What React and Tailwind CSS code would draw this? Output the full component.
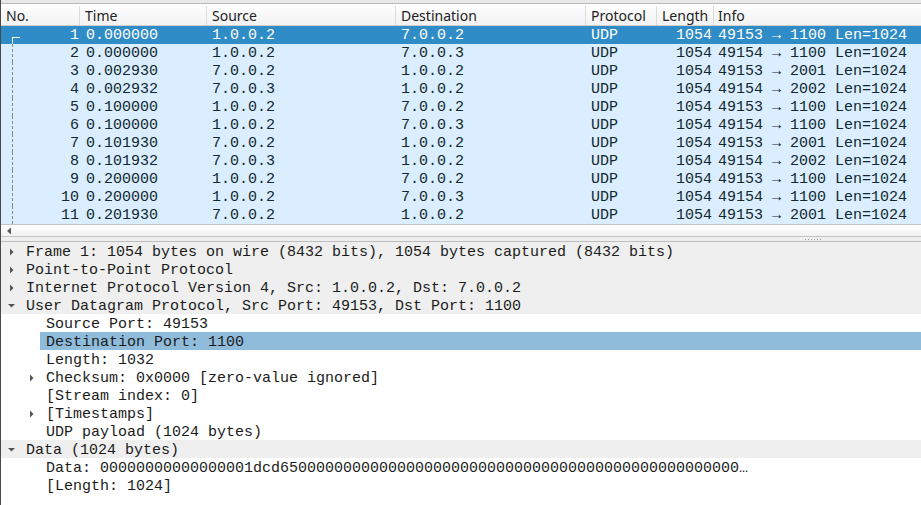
import React from "react";

const packets = [
  ["1", "0.000000", "1.0.0.2", "7.0.0.2", "49153", "1100"],
  ["2", "0.000000", "1.0.0.2", "7.0.0.3", "49154", "1100"],
  ["3", "0.002930", "7.0.0.2", "1.0.0.2", "49153", "2001"],
  ["4", "0.002932", "7.0.0.3", "1.0.0.2", "49154", "2002"],
  ["5", "0.100000", "1.0.0.2", "7.0.0.2", "49153", "1100"],
  ["6", "0.100000", "1.0.0.2", "7.0.0.3", "49154", "1100"],
  ["7", "0.101930", "7.0.0.2", "1.0.0.2", "49153", "2001"],
  ["8", "0.101932", "7.0.0.3", "1.0.0.2", "49154", "2002"],
  ["9", "0.200000", "1.0.0.2", "7.0.0.2", "49153", "1100"],
  ["10", "0.200000", "1.0.0.2", "7.0.0.3", "49154", "1100"],
  ["11", "0.201930", "7.0.0.2", "1.0.0.2", "49153", "2001"],
];

const tree = [
  { level: 0, arrow: "closed", text: "Frame 1: 1054 bytes on wire (8432 bits), 1054 bytes captured (8432 bits)" },
  { level: 0, arrow: "closed", text: "Point-to-Point Protocol" },
  { level: 0, arrow: "closed", text: "Internet Protocol Version 4, Src: 1.0.0.2, Dst: 7.0.0.2" },
  { level: 0, arrow: "open", text: "User Datagram Protocol, Src Port: 49153, Dst Port: 1100" },
  { level: 1, text: "Source Port: 49153" },
  { level: 1, text: "Destination Port: 1100", selected: true },
  { level: 1, text: "Length: 1032" },
  { level: 1, arrow: "closed", text: "Checksum: 0x0000 [zero-value ignored]" },
  { level: 1, text: "[Stream index: 0]" },
  { level: 1, arrow: "closed", text: "[Timestamps]" },
  { level: 1, text: "UDP payload (1024 bytes)" },
  { level: 0, arrow: "open", text: "Data (1024 bytes)" },
  { level: 1, text: "Data: 00000000000000001dcd650000000000000000000000000000000000000000000000000…" },
  { level: 1, text: "[Length: 1024]" },
];

const mono = { fontFamily: '"Liberation Mono", "DejaVu Sans Mono", monospace' };

function Arrow({ type }) {
  if (type === "open") {
    return (
      <svg width="10" height="10" viewBox="0 0 10 10" className="shrink-0">
        <path d="M1 3 L8 3 L4.5 6.5 Z" fill="#555" />
      </svg>
    );
  }
  return (
    <svg width="10" height="10" viewBox="0 0 10 10" className="shrink-0">
      <path d="M3 1.5 L6.5 5 L3 8.5 Z" fill="#555" />
    </svg>
  );
}

function HeaderCell({ label, className }) {
  return (
    <div className={`h-full flex items-center pl-[5px] border-r border-[#dcdcdc] ${className}`}>
      {label}
    </div>
  );
}

export default function App() {
  return (
    <div className="w-[921px] h-[505px] bg-white overflow-hidden text-[#12272e] border-l border-[#4a4a4a]">
      <div className="h-[4px] bg-[#e8e8e8] border-b border-[#b8b8b8]" />
      <div
        className="h-[22px] flex bg-gradient-to-b from-white to-[#f2f2f2] border-b border-[#cfcfcf] text-[14px] text-[#222] pt-[2px]"
        style={{ fontFamily: '"Noto Sans", "Open Sans", sans-serif' }}
      >
        <HeaderCell label="No." className="w-[79px]" />
        <HeaderCell label="Time" className="w-[127px]" />
        <HeaderCell label="Source" className="w-[189px]" />
        <HeaderCell label="Destination" className="w-[190px]" />
        <HeaderCell label="Protocol" className="w-[71px]" />
        <HeaderCell label="Length" className="w-[57px]" />
        <div className="h-full flex items-center pl-[4px] flex-1">Info</div>
      </div>

      <div className="text-[15px]" style={mono}>
        {packets.map((p, i) => {
          const sel = i === 0;
          return (
            <div
              key={p[0]}
              className={`h-[18px] flex items-center whitespace-pre pt-[2px] ${
                sel ? "bg-[#308cc6] text-white" : "bg-[#daeeff]"
              }`}
            >
              <div className="w-[79px] h-full relative flex items-center justify-end pr-[1px]">
                {sel ? (
                  <span className="absolute left-[11px] top-[9px] w-[8px] h-[8px] border-l border-t border-white" />
                ) : (
                  <span className="absolute left-[11px] -top-[2px] h-[18px] border-l border-dashed border-[#7a8a96]" />
                )}
                {p[0]}
              </div>
              <div className="w-[127px] pl-[6px]">{p[1]}</div>
              <div className="w-[189px] pl-[5px]">{p[2]}</div>
              <div className="w-[190px] pl-[5px]">{p[3]}</div>
              <div className="w-[71px] pl-[5px]">UDP</div>
              <div className="w-[57px] text-right pr-[2px]">1054</div>
              <div className="flex-1 pl-[4px]">
                {p[4]} → {p[5]} Len=1024
              </div>
            </div>
          );
        })}
      </div>

      <div className="h-[13px] border-t border-b border-[#c4c4c4] bg-gradient-to-b from-white to-[#f1f1f1] flex items-center pl-[5px]">
        <svg width="6" height="8" viewBox="0 0 6 8">
          <path d="M5 0.5 L1 4 L5 7.5 Z" fill="#5a5a5a" />
        </svg>
      </div>
      <div className="h-[5px] bg-[#efefef] border-b border-[#bdbdbd] flex items-center justify-end pr-[100px]">
        <div className="flex gap-[2px]">
          {[0, 1, 2, 3, 4, 5].map((d) => (
            <span key={d} className="w-[1px] h-[1px] bg-[#a0a0a0]" />
          ))}
        </div>
      </div>

      <div className="text-[15px] text-[#1b1b1b]" style={mono}>
        {tree.map((t, i) => (
          <div
            key={i}
            className={`h-[18px] flex items-center whitespace-pre ${
              t.level === 0 ? "bg-[#efefef]" : "bg-white"
            }`}
          >
            <div className={t.level === 0 ? "w-[6px]" : "w-[26px]"} />
            <div className="w-[16px] flex items-center pt-[1px]">{t.arrow && <Arrow type={t.arrow} />}</div>
            <div
              className={`h-full flex items-center flex-1 pt-[4px] ${
                t.selected ? "bg-[#90bcdc] -ml-[3px] pl-[6px]" : "pl-[3px]"
              }`}
            >
              {t.text}
            </div>
          </div>
        ))}
      </div>
    </div>
  );
}
